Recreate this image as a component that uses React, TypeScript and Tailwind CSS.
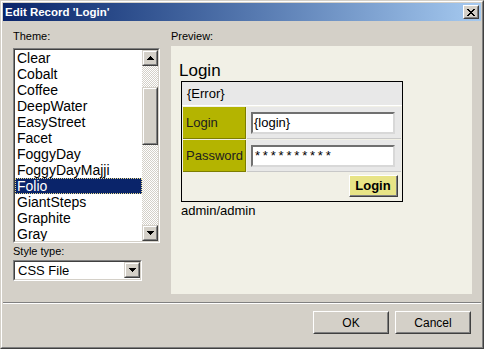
import React from 'react';

const themes = [
  'Clear',
  'Cobalt',
  'Coffee',
  'DeepWater',
  'EasyStreet',
  'Facet',
  'FoggyDay',
  'FoggyDayMajji',
  'Folio',
  'GiantSteps',
  'Graphite',
  'Gray',
];

// classic win 3d edge, raised
const Raised: React.FC<{ className?: string; children?: React.ReactNode }> = ({ className = '', children }) => (
  <div className={`border border-t-white border-l-white border-b-[#404040] border-r-[#404040] ${className}`}>
    <div className="w-full h-full border border-t-[#d4d0c8] border-l-[#d4d0c8] border-b-[#808080] border-r-[#808080] bg-[#d4d0c8] flex items-center justify-center">
      {children}
    </div>
  </div>
);

const ScrollBtn: React.FC<{ children?: React.ReactNode }> = ({ children }) => (
  <div className="w-[16px] h-[16px] shrink-0 border border-t-[#d4d0c8] border-l-[#d4d0c8] border-b-[#404040] border-r-[#404040]">
    <div className="w-full h-full border border-t-white border-l-white border-b-[#808080] border-r-[#808080] bg-[#d4d0c8] flex items-center justify-center">
      {children}
    </div>
  </div>
);

const ArrowUp = () => (
  <svg width="7" height="4" viewBox="0 0 7 4" shapeRendering="crispEdges">
    <path d="M3 0h1v1H3z M2 1h3v1H2z M1 2h5v1H1z M0 3h7v1H0z" fill="#000" />
  </svg>
);

const ArrowDown = () => (
  <svg width="7" height="4" viewBox="0 0 7 4" shapeRendering="crispEdges">
    <path d="M0 0h7v1H0z M1 1h5v1H1z M2 2h3v1H2z M3 3h1v1H3z" fill="#000" />
  </svg>
);

const CloseGlyph = () => (
  <svg width="8" height="7" viewBox="0 0 8 7" shapeRendering="crispEdges">
    <path
      d="M0 0h2v1H0z M6 0h2v1H6z M1 1h2v1H1z M5 1h2v1H5z M2 2h4v1H2z M3 3h2v1H3z M2 4h4v1H2z M1 5h2v1H1z M5 5h2v1H5z M0 6h2v1H0z M6 6h2v1H6z"
      fill="#000"
    />
  </svg>
);

const Sunken: React.FC<{ className?: string; children?: React.ReactNode }> = ({ className = '', children }) => (
  <div className={`border border-t-[#808080] border-l-[#808080] border-b-white border-r-white ${className}`}>
    <div className="w-full h-full border border-t-[#404040] border-l-[#404040] border-b-[#d4d0c8] border-r-[#d4d0c8] bg-white flex overflow-hidden">
      {children}
    </div>
  </div>
);

const Checker = ({ h }: { h: string }) => (
  <div className={`${h} bg-white bg-[conic-gradient(#d4d0c8_25%,#ffffff_0_50%,#d4d0c8_0_75%,#ffffff_0)] bg-[length:2px_2px]`} />
);

const PreviewForm = () => (
  <div className="w-[301px] h-[248px] bg-[#f1f0e6] pt-[15px] pl-[10px] text-[13px] text-black">
    <div className="text-[17px] leading-[20px] -ml-[2px]">Login</div>
    <div className="w-[222px] border border-black flex flex-col">
      <div className="h-[24px] bg-[#e8e8e8] border-b border-white flex items-center pl-[5px]">{'{Error}'}</div>
      <div className="mt-px h-[32px] flex pl-px pr-px gap-px">
        <div className="w-[63px] bg-[#b4b400] border-r border-b border-[#7d7d00] flex items-center pl-[3px] text-[#202020]">Login</div>
        <div className="flex-1 bg-[#e8e8e8] border-b border-[#c8c8c8] flex items-center pl-[4px]">
          <div className="w-[144px] h-[22px] bg-white border-2 border-t-[#707070] border-l-[#707070] border-b-[#d8d8d8] border-r-[#d8d8d8] flex items-center pl-px">
            {'{login}'}
          </div>
        </div>
      </div>
      <div className="mt-px h-[32px] flex pl-px pr-px gap-px">
        <div className="w-[63px] bg-[#b4b400] border-r border-b border-[#7d7d00] flex items-center pl-[3px] text-[#202020]">Password</div>
        <div className="flex-1 bg-[#e8e8e8] border-b border-[#c8c8c8] flex items-center pl-[4px]">
          <div className="w-[144px] h-[22px] bg-white border-2 border-t-[#707070] border-l-[#707070] border-b-[#d8d8d8] border-r-[#d8d8d8] flex items-center pl-[2px] tracking-[2.8px]">
            **********
          </div>
        </div>
      </div>
      <div className="h-[29px] flex justify-end items-start pt-[3px] pr-[4px]">
        <div className="w-[49px] h-[22px] border border-t-white border-l-white border-b-[#404040] border-r-[#404040]">
          <div className="w-full h-full bg-[#e8e486] border-b border-r border-[#808080] flex items-center justify-center font-bold">
            Login
          </div>
        </div>
      </div>
    </div>
    <div className="leading-[15px] mt-[1px]">admin/admin</div>
  </div>
);

export default function App() {
  return (
    <div className="w-[484px] h-[349px] bg-[#d4d0c8] font-['Liberation_Sans',Arial,sans-serif] border border-t-[#d4d0c8] border-l-[#d4d0c8] border-b-[#404040] border-r-[#404040]">
      <div className="h-full border border-t-white border-l-white border-b-[#808080] border-r-[#808080] p-px flex flex-col">
        {/* title bar */}
        <div className="h-[18px] shrink-0 bg-linear-to-r from-[#0a246a] to-[#a6caf0] flex items-center justify-between pl-[2px] pr-[2px]">
          <span className="text-white font-bold text-[11.5px] leading-[14px]">Edit Record 'Login'</span>
          <Raised className="w-[16px] h-[14px]">
            <CloseGlyph />
          </Raised>
        </div>

        <div className="flex pl-[10px] pt-[9px] gap-[11px]">
          {/* left column */}
          <div className="w-[147px] flex flex-col">
            <div className="text-[11px] leading-[13px] h-[13px] mb-[5px]">Theme:</div>
            <Sunken className="w-[147px] h-[195px]">
              <div className="flex-1 flex flex-col">
                {themes.map(t =>
                  t === 'Folio' ? (
                    <div
                      key={t}
                      className="h-[16px] shrink-0 bg-[#0a246a] text-white border border-dotted border-[#e8d98a] pl-px text-[14px] leading-[14px]"
                    >
                      {t}
                    </div>
                  ) : (
                    <div key={t} className="h-[16px] shrink-0 pl-[2px] text-[14px] leading-[16px] text-black">
                      {t}
                    </div>
                  )
                )}
              </div>
              <div className="w-[16px] flex flex-col">
                <ScrollBtn>
                  <ArrowUp />
                </ScrollBtn>
                <Checker h="h-[21px]" />
                <ScrollBtn />
                <div className="h-[58px] -mt-[16px] border border-t-[#d4d0c8] border-l-[#d4d0c8] border-b-[#404040] border-r-[#404040]">
                  <div className="w-full h-full border border-t-white border-l-white border-b-[#808080] border-r-[#808080] bg-[#d4d0c8]" />
                </div>
                <div className="flex-1 bg-white bg-[conic-gradient(#d4d0c8_25%,#ffffff_0_50%,#d4d0c8_0_75%,#ffffff_0)] bg-[length:2px_2px]" />
                <ScrollBtn>
                  <ArrowDown />
                </ScrollBtn>
              </div>
            </Sunken>
            <div className="text-[11px] leading-[13px] h-[13px] mt-[2px] mb-[2px]">Style type:</div>
            <Sunken className="w-[129px] h-[21px]">
              <div className="flex-1 text-[13px] leading-[17px] pl-[3px] text-black">CSS File</div>
              <ScrollBtn>
                <ArrowDown />
              </ScrollBtn>
            </Sunken>
          </div>

          {/* right column */}
          <div className="flex flex-col">
            <div className="text-[11px] leading-[13px] h-[13px] mb-[3px]">Preview:</div>
            <PreviewForm />
          </div>
        </div>

        <div className="mt-[8px] h-[2px] border-t border-t-[#808080] border-b border-b-white" />

        <div className="flex justify-end gap-[6px] pr-[10px] mt-[7px]">
          <Raised className="w-[76px] h-[23px]">
            <span className="text-[12px] text-black">OK</span>
          </Raised>
          <Raised className="w-[76px] h-[23px]">
            <span className="text-[12px] text-black">Cancel</span>
          </Raised>
        </div>
      </div>
    </div>
  );
}
